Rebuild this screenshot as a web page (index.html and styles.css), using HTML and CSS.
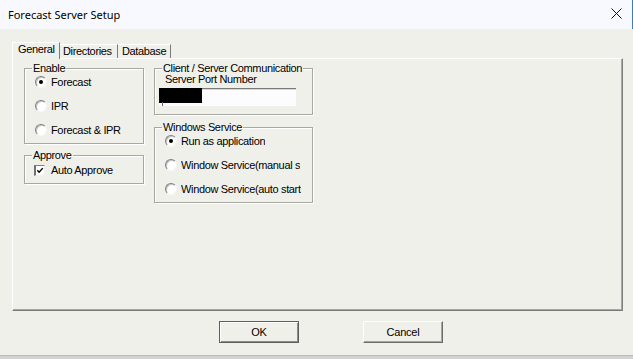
FILE: index.html
```html
<!DOCTYPE html>
<html>
<head>
<meta charset="utf-8">
<title>Forecast Server Setup</title>
<link rel="stylesheet" href="styles.css">
</head>
<body>
<div class="window">
  <div class="titlebar">
    <span class="title">Forecast Server Setup</span>
    <svg class="close" width="11" height="11" viewBox="0 0 11 11"><path d="M0.5 0.5L10.5 10.5M10.5 0.5L0.5 10.5" stroke="#111" stroke-width="1" fill="none"/></svg>
  </div>
  <div class="client">
    <div class="tabs">
      <div class="tab active tab-general">General</div>
      <div class="tab tab-dirs">Directories</div>
      <div class="tab tab-db">Database</div>
    </div>
    <div class="panel">
      <div class="col col-left">
        <fieldset class="group g-enable">
          <legend>Enable</legend>
          <div class="opt"><span class="radio on"></span><span class="opt-label">Forecast</span></div>
          <div class="opt"><span class="radio"></span><span class="opt-label">IPR</span></div>
          <div class="opt"><span class="radio"></span><span class="opt-label">Forecast &amp; IPR</span></div>
        </fieldset>
        <fieldset class="group g-approve">
          <legend>Approve</legend>
          <div class="chk-row"><span class="checkbox"><svg width="9" height="9" viewBox="0 0 9 9"><path d="M1.5 4.2L3.5 6.4L7.6 1.8" stroke="#000" stroke-width="1.6" fill="none"/></svg></span><span class="opt-label">Auto Approve</span></div>
        </fieldset>
      </div>
      <div class="col col-right">
        <fieldset class="group g-comm">
          <legend>Client / Server Communication</legend>
          <div class="field-label">Server Port Number</div>
          <div class="input"><span class="redact"></span><span class="caret"></span></div>
        </fieldset>
        <fieldset class="group g-service">
          <legend>Windows Service</legend>
          <div class="opt"><span class="radio on"></span><span class="opt-label clip">Run as application</span></div>
          <div class="opt"><span class="radio"></span><span class="opt-label clip">Window Service(manual s</span></div>
          <div class="opt"><span class="radio"></span><span class="opt-label clip">Window Service(auto start</span></div>
        </fieldset>
      </div>
    </div>
    <div class="buttons">
      <button class="btn btn-default">OK</button>
      <button class="btn">Cancel</button>
    </div>
  </div>
  <div class="bottomband"></div>
</div>
</body>
</html>
```

FILE: styles.css
```css
html, body {
  margin: 0;
  padding: 0;
}
body {
  width: 633px;
  height: 359px;
  overflow: hidden;
  font-family: "Liberation Sans", Arial, sans-serif;
  font-size: 11px;
  letter-spacing: -0.35px;
  color: #000;
  background: #f0f0ea;
}
.window {
  width: 633px;
  height: 359px;
  display: flex;
  flex-direction: column;
}
.titlebar {
  flex: none;
  height: 29px;
  box-sizing: border-box;
  background: #f7f9fe;
  border-right: 1px solid #2a7fd8;
  padding: 0 10px 0 8px;
  display: flex;
  align-items: center;
  justify-content: space-between;
  font-family: "Noto Sans", sans-serif;
  font-size: 11px;
  letter-spacing: 0;
}
.title {
  margin-top: -1px;
}
.close {
  display: block;
  margin-top: -2px;
}
.client {
  flex: 1;
  background: #f0f0ea;
  padding: 13px 10px 0 12px;
  display: flex;
  flex-direction: column;
}
.tabs {
  display: flex;
  align-items: flex-end;
  height: 16px;
}
.tab {
  box-sizing: border-box;
  height: 14px;
  line-height: 13px;
  border-top: 1px solid #ffffff;
  border-right: 1px solid #7c7c7c;
  white-space: nowrap;
  background: #f0f0ea;
}
.tab.active {
  height: 17px;
  margin-bottom: -1px;
  border-left: 1px solid #ffffff;
  position: relative;
  z-index: 1;
}
.tab-general {
  width: 48px;
  padding-left: 5px;
}
.tab-dirs {
  width: 58px;
  padding-left: 3px;
}
.tab-db {
  width: 53px;
  padding-left: 4px;
}
.panel {
  box-sizing: border-box;
  height: 253px;
  border-top: 1px solid #ffffff;
  border-left: 1px solid #ffffff;
  border-right: 1px solid #808080;
  border-bottom: 1px solid #7a7a7a;
  box-shadow: inset -1px -1px 0 #a6a6a6;
  padding: 3px 0 0 11px;
  display: flex;
  gap: 10px;
  align-items: flex-start;
}
.col {
  display: flex;
  flex-direction: column;
}
.col-left {
  width: 120px;
  gap: 5px;
}
.col-right {
  width: 159px;
  gap: 6px;
}
.group {
  margin: 0;
  padding: 0;
  min-width: 0;
  border: 1px solid #a8a8a3;
  box-shadow: inset 1px 1px 0 #ffffff, 1px 1px 0 #ffffff;
}
.group legend {
  margin-left: 7px;
  padding: 0 1px;
  line-height: 13px;
}
.g-enable {
  display: flex;
  flex-direction: column;
  gap: 10px;
  padding-bottom: 6px;
}
.g-approve {
  padding-top: 0;
  padding-bottom: 5px;
}
.g-comm {
  padding-bottom: 8px;
}
.g-service {
  display: flex;
  flex-direction: column;
  gap: 10px;
  padding-bottom: 6px;
}
.opt {
  display: flex;
  align-items: center;
  height: 14px;
  gap: 4px;
  margin-left: 10px;
  white-space: nowrap;
}
.opt-label {
  line-height: 13px;
}
.clip {
  display: block;
  max-width: 124px;
  overflow: hidden;
  white-space: nowrap;
}
.radio {
  flex: none;
  box-sizing: border-box;
  width: 12px;
  height: 12px;
  border-radius: 50%;
  border: 1px solid;
  border-color: #7e7e7e #f6f6f6 #f6f6f6 #7e7e7e;
  background: #ffffff;
  box-shadow: inset 1px 1px 0 #c4c4c4;
  display: flex;
  align-items: center;
  justify-content: center;
}
.radio.on::after {
  content: "";
  width: 4px;
  height: 4px;
  border-radius: 50%;
  background: #000;
}
.chk-row {
  display: flex;
  align-items: center;
  height: 16px;
  gap: 6px;
  margin-left: 9px;
}
.checkbox {
  flex: none;
  box-sizing: border-box;
  width: 11px;
  height: 11px;
  border-top: 1px solid #808080;
  border-left: 2px solid #707070;
  border-right: 1px solid #f0f0f0;
  border-bottom: 1px solid #f0f0f0;
  background: #ffffff;
  display: flex;
  align-items: center;
  justify-content: center;
}
.checkbox svg {
  display: block;
}
.field-label {
  margin-left: 10px;
  margin-top: -2px;
  line-height: 13px;
}
.input {
  position: relative;
  box-sizing: border-box;
  width: 137px;
  height: 18px;
  margin-left: 4px;
  margin-top: 2px;
  background: #fcfcfe;
  border-top: 1px solid #7a7a7a;
  box-shadow: inset 0 1px 0 #d8d8d8;
}
.redact {
  position: absolute;
  left: 0;
  top: -1px;
  width: 43px;
  height: 15px;
  background: #000;
}
.caret {
  position: absolute;
  left: 3px;
  top: 13px;
  width: 1px;
  height: 4px;
  background: #666;
}
.buttons {
  display: flex;
  gap: 64px;
  padding-left: 207px;
  margin-top: 10px;
}
.btn {
  box-sizing: border-box;
  width: 80px;
  height: 22px;
  margin: 0;
  padding: 0;
  font-family: "Liberation Sans", Arial, sans-serif;
  font-size: 11px;
  letter-spacing: -0.2px;
  color: #000;
  background: #f0f0ea;
  border-top: 1px solid #fdfdfd;
  border-left: 1px solid #fdfdfd;
  border-right: 1px solid #6c6c6c;
  border-bottom: 1px solid #6c6c6c;
  box-shadow: inset -1px -1px 0 #a4a4a4;
}
.btn-default {
  border: 1px solid #5e5e5e;
  box-shadow: inset 1px 1px 0 #ffffff, inset -1px -1px 0 #8c8c8c;
}
.bottomband {
  flex: none;
  height: 4px;
  box-sizing: border-box;
  border-top: 1px solid #b9b9b9;
  background: #d3d3d3;
}
```
